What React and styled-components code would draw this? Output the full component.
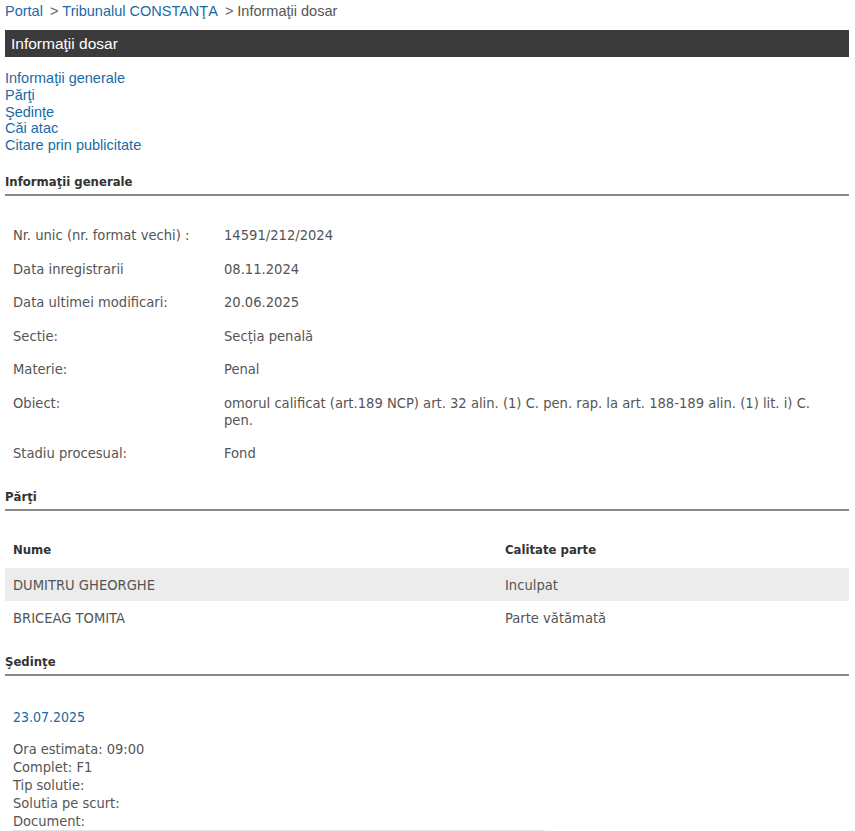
import styled, { createGlobalStyle } from 'styled-components';

const GlobalStyle = createGlobalStyle`
  body {
    margin: 0;
    background: #ffffff;
    font-family: 'Liberation Sans', Arial, sans-serif;
  }
`;

const Page = styled.div`
  padding: 0 6px 0 5px;
`;

const Breadcrumb = styled.div`
  font-size: 14.5px;
  line-height: 16px;
  padding-top: 3px;
  color: #555555;
`;

const Crumb = styled.a`
  color: #1a6aa6;
  text-decoration: none;
`;

const Sep = styled.span`
  color: #666666;
  margin: 0 4px 0 7px;
`;

const TitleBar = styled.div`
  margin-top: 11px;
  background: #3b3b3b;
  color: #ffffff;
  font-size: 15.5px;
  line-height: 27px;
  padding-left: 6px;
`;

const NavList = styled.ul`
  list-style: none;
  margin: 13px 0 0;
  padding: 0;
`;

const NavItem = styled.li`
  font-size: 14.5px;
  line-height: 16.8px;
  a {
    color: #1a6aa6;
    text-decoration: none;
  }
`;

const SectionTitle = styled.h3`
  margin: ${(p) => p.$top}px 0 0;
  font-family: 'DejaVu Sans Condensed', 'DejaVu Sans', sans-serif;
  font-weight: bold;
  font-size: 13px;
  color: #333333;
  line-height: 16px;
  padding-bottom: 4px;
  border-bottom: 2px solid #8a8a8a;
`;

const InfoTable = styled.div`
  margin-top: 22px;
  font-family: 'DejaVu Sans Condensed', 'DejaVu Sans', sans-serif;
  font-size: 14.6px;
  color: #555555;
`;

const InfoRow = styled.div`
  display: grid;
  grid-template-columns: 211px 1fr;
  padding: 8.25px 20px 8.25px 8px;
  line-height: 17px;
`;

const PartyTable = styled.div`
  margin-top: 21px;
  font-family: 'DejaVu Sans Condensed', 'DejaVu Sans', sans-serif;
  font-size: 14.6px;
  color: #555555;
`;

const PartyRow = styled.div`
  display: grid;
  grid-template-columns: 492px 1fr;
  padding: 0 8px;
  line-height: ${(p) => (p.$head ? 36 : 33)}px;
  background: ${(p) => (p.$shaded ? '#ececec' : 'transparent')};
  font-weight: ${(p) => (p.$head ? 'bold' : 'normal')};
  font-size: ${(p) => (p.$head ? '13px' : 'inherit')};
  color: ${(p) => (p.$head ? '#333333' : '#555555')};
`;

const Hearing = styled.div`
  font-family: 'DejaVu Sans Condensed', 'DejaVu Sans', sans-serif;
  color: #555555;
  padding: 0 8px;
`;

const HearingDate = styled.div`
  margin-top: 32px;
  color: #1a6aa6;
  font-size: 14px;
  line-height: 18px;
`;

const HearingLines = styled.div`
  margin-top: 14px;
  font-size: 14.5px;
  line-height: 18px;
  width: 532px;
  border-bottom: 1px solid #e6e6e6;
`;

const info = [
  ['Nr. unic (nr. format vechi) :', '14591/212/2024'],
  ['Data inregistrarii', '08.11.2024'],
  ['Data ultimei modificari:', '20.06.2025'],
  ['Sectie:', 'Secția penală'],
  ['Materie:', 'Penal'],
  [
    'Obiect:',
    'omorul calificat (art.189 NCP) art. 32 alin. (1) C. pen. rap. la art. 188-189 alin. (1) lit. i) C. pen.',
  ],
  ['Stadiu procesual:', 'Fond'],
];

const parties = [
  ['DUMITRU GHEORGHE', 'Inculpat'],
  ['BRICEAG TOMITA', 'Parte vătămată'],
];

const links = [
  'Informaţii generale',
  'Părţi',
  'Şedinţe',
  'Căi atac',
  'Citare prin publicitate',
];

const App = () => {
  return (
    <Page>
      <GlobalStyle />
      <Breadcrumb>
        <Crumb href="#">Portal</Crumb>
        <Sep>&gt;</Sep>
        <Crumb href="#">Tribunalul CONSTANŢA</Crumb>
        <Sep>&gt;</Sep>
        Informaţii dosar
      </Breadcrumb>
      <TitleBar>Informaţii dosar</TitleBar>
      <NavList>
        {links.map((l) => (
          <NavItem key={l}>
            <a href="#">{l}</a>
          </NavItem>
        ))}
      </NavList>

      <SectionTitle $top={20}>Informaţii generale</SectionTitle>
      <InfoTable>
        {info.map(([k, v]) => (
          <InfoRow key={k}>
            <span>{k}</span>
            <span>{v}</span>
          </InfoRow>
        ))}
      </InfoTable>

      <SectionTitle $top={20}>Părţi</SectionTitle>
      <PartyTable>
        <PartyRow $head>
          <span>Nume</span>
          <span>Calitate parte</span>
        </PartyRow>
        {parties.map(([n, c], i) => (
          <PartyRow key={n} $shaded={i % 2 === 0}>
            <span>{n}</span>
            <span>{c}</span>
          </PartyRow>
        ))}
      </PartyTable>

      <SectionTitle $top={20}>Şedinţe</SectionTitle>
      <Hearing>
        <HearingDate>23.07.2025</HearingDate>
        <HearingLines>
          Ora estimata: 09:00
          <br />
          Complet: F1
          <br />
          Tip solutie:
          <br />
          Solutia pe scurt:
          <br />
          Document:
        </HearingLines>
      </Hearing>
    </Page>
  );
};

export default App;
